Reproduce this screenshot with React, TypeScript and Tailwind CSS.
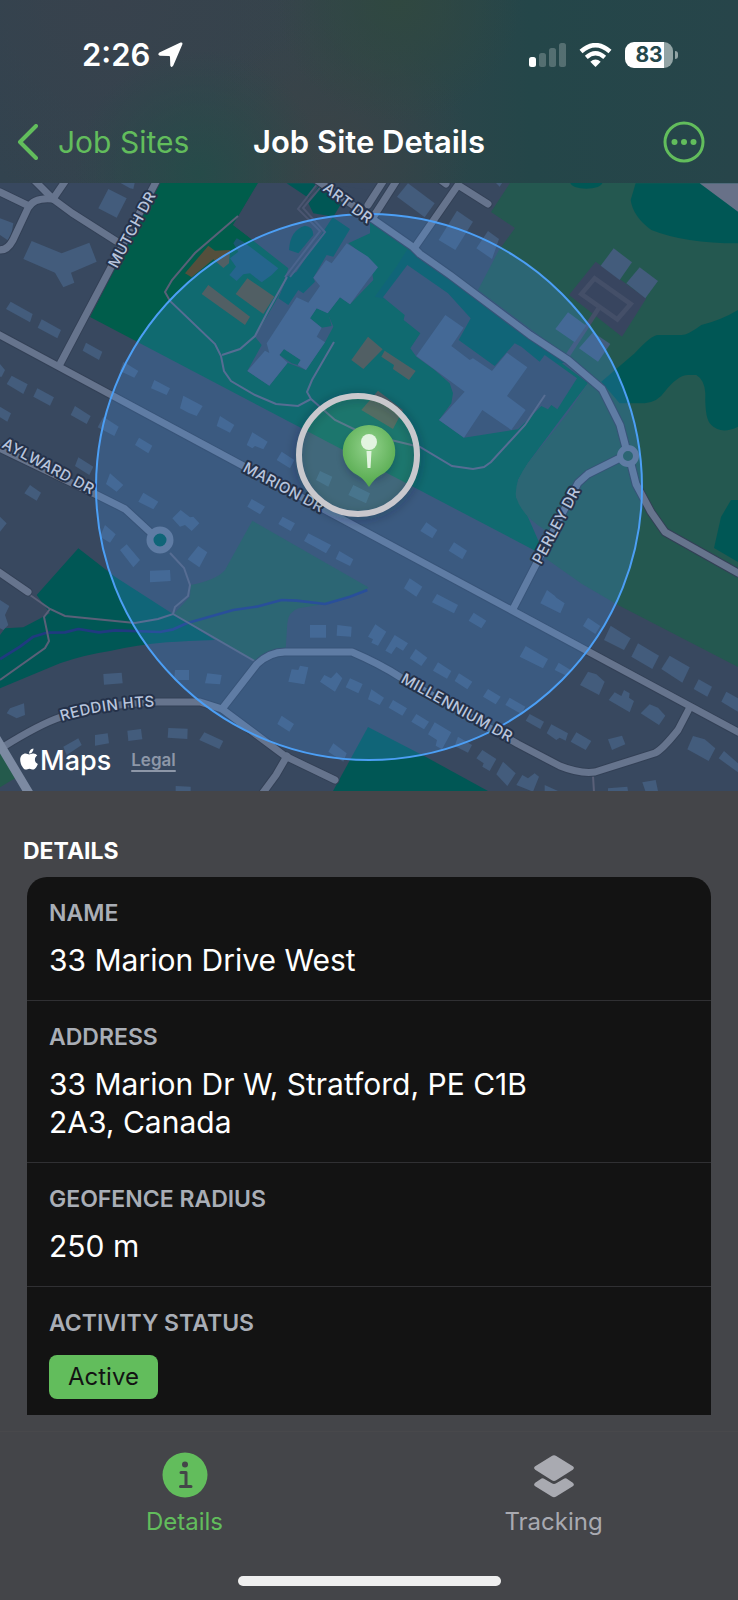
import React, { useState } from "react";
import { FaApple } from "react-icons/fa";

const colors = {
  land: "#38485f",
  green: "#005d4b",
  teal: "#005755",
  park: "#245850",
  building: "#435c7c",
  brown: "#544f3c",
  road: "#66748d",
  path: "#5a6078",
};

// the map is drawn as four tiles, each on its own grid of a third of a pixel
const tiles = {
  nw: "translate(0 180) scale(0.33333)",
  ne: "translate(368 180) scale(0.33333)",
  sw: "translate(0 480) scale(0.33333)",
  se: "translate(368 480) scale(0.33333)",
};

const houses: Record<keyof typeof tiles, string[]> = {
  nw: [
    "325,27 380,55 350,113 295,85",
    "0,115 40,130 30,185 0,165",
    "95,183 185,220 268,188 290,245 213,278 223,308 190,322 165,278 70,237",
    "32,365 98,402 90,427 18,387",
    "125,418 183,450 172,475 113,443",
    "258,488 307,515 297,540 248,512",
    "370,545 415,573 403,593 360,573",
    "463,600 510,625 500,645 453,625",
    "550,647 608,678 590,708 565,698 540,685",
    "660,708 703,735 690,758 650,738",
    "757,757 803,785 790,808 765,798 757,805 740,795",
    "845,815 883,840 870,865 830,840",
    "35,587 83,613 70,642 20,612",
    "112,625 162,652 150,677 100,650",
    "225,678 272,708 260,732 212,705",
    "310,710 356,740 343,768 293,742",
    "417,773 457,797 445,820 405,795",
    "235,832 280,860 268,885 225,858",
    "0,680 33,700 22,725 0,712",
    "0,552 15,570 5,590 0,590",
    "355,5 405,5 400,27 390,25",
    "960,873 997,890 985,920 948,900",
    // school, west wing
    "1040,190 1104,230 1134,262 1104,300 1050,373 1020,352 983,400 950,385 930,415 965,443 950,470 975,487 918,570 893,555 902,540 852,507 838,525 863,548 808,617 742,573 795,512 808,519 800,490 890,352 925,368 960,318 940,293 978,240 995,250",
  ],
  ne: [
    "120,10 200,70 170,112 87,50",
    "267,92 315,125 262,210 212,180",
    "360,153 393,177 372,237 325,205",
    "380,5 405,5 395,20",
    "737,205 792,247 755,300 698,257",
    "815,262 870,303 832,355 775,310",
    "600,397 655,437 620,487 562,447",
    "675,457 727,492 690,545 633,505",
    // school, east wing
    "232,405 287,443 250,498 305,540 315,535 372,573 417,518 478,562 417,648 473,690 430,750 343,690 288,773 213,720 290,635 145,528",
  ],
  sw: [
    "90,15 123,38 110,62 73,40",
    "0,110 20,130 0,155",
    "330,-20 370,15 350,35 318,12",
    "430,38 475,65 460,88 415,65",
    "542,90 570,112 580,110 598,130 575,153 555,135 540,140 517,115",
    "595,198 622,217 598,262 563,238",
    "380,193 420,240 400,262 360,210",
    "315,135 347,163 330,188 300,170",
    "450,272 510,270 512,303 450,307",
    "755,57 795,80 780,103 742,80",
    "848,110 885,130 872,153 835,132",
    "925,160 993,195 978,220 912,183",
    "1018,213 1060,238 1050,258 1007,237",
    "930,435 978,435 978,473 930,473",
    "1012,435 1055,440 1053,470 1010,467",
    "1060,15 1110,40 1098,70 1045,45",
    "310,582 365,578 368,610 312,614",
    "525,570 567,570 567,600 522,600",
    "622,580 665,585 660,613 615,610",
    "30,685 72,670 75,705 50,715 20,700",
    "0,360 28,378 15,405 25,435 10,450 0,445",
    "875,568 895,570 900,557 925,562 913,613 865,605",
    "960,605 973,585 993,595 1010,577 1027,595 1005,635",
    "1050,595 1088,612 1075,640 1037,622",
    "845,707 882,732 868,755 832,732",
    "1000,790 1040,820 1030,845 985,815",
    "285,765 323,760 327,790 285,797",
    "382,752 423,747 427,778 385,783",
    "505,744 563,746 562,777 503,773",
    "613,757 670,783 658,807 598,780",
    "190,800 235,775 245,795 200,825",
    "527,918 572,920 572,935 527,935",
  ],
  se: [
    "175,127 208,150 193,175 157,153",
    "258,187 297,212 283,238 242,212",
    "125,295 163,320 145,350 108,325",
    "207,342 270,375 258,400 192,367",
    "317,398 355,422 340,445 302,422",
    "22,433 55,455 30,497 10,488 15,478 0,470",
    "80,465 120,490 105,512 85,500 70,522 52,512",
    "143,507 178,533 160,558 125,535",
    "210,547 250,573 237,596 195,572",
    "273,580 313,605 298,628 260,603",
    "360,627 398,650 383,673 345,650",
    "425,653 472,680 460,702 412,675",
    "485,702 528,725 517,747 473,722",
    "10,628 48,653 35,675 0,658",
    "75,660 117,685 103,707 62,683",
    "145,702 183,725 168,748 130,725",
    "200,727 250,757 222,808 203,797 207,780 180,763",
    "270,770 312,795 300,818 260,798",
    "343,810 385,837 365,873 343,860 347,850 325,835",
    "405,845 443,880 418,918 385,883",
    "463,885 480,895 500,880 513,890 495,935 445,915",
    "530,915 570,933 530,933",
    "550,733 600,760 593,782 575,773 565,780 536,760",
    "625,757 670,783 653,810 608,785",
    "720,778 762,767 772,793 732,810",
    "823,907 863,900 870,933 832,933",
    "720,925 778,920 780,933 720,933",
    "975,768 1010,778 1042,805 1022,843 958,808",
    "1068,813 1110,850 1110,877 1052,835",
    "537,330 560,347 565,353 590,370 577,400 517,370",
    "660,413 697,438 682,462 645,438",
    "728,437 788,475 768,510 708,480",
    "810,490 873,527 853,567 790,530",
    "905,527 965,562 943,608 880,567",
    "992,598 1032,620 1018,650 977,627",
    "1075,635 1110,655 1110,695 1060,665",
    "473,498 540,537 525,565 455,530",
    "572,548 608,570 595,587 560,570",
    "660,575 685,583 710,605 693,645 636,615",
    "740,637 760,648 768,630 785,640 783,653 798,663 785,697 722,660",
    "845,673 870,683 892,707 873,735 818,700",
  ],
};

const roads = [
  "M0 192 L27 205",
  "M-4 249 Q6 253 13 240 L28 208 Q34 197 53 199 L72 213 L116 241",
  "M34 180 L53 199 L66 180",
  "M157 180 L60 364",
  "M-4 333 L738 732",
  "M-5 446 L97 495 L125 509 L150 532",
  "M-4 570 L28 592",
  "M3 747 Q40 724 61 717 Q110 703 157 702 H200 L222 709 L285 756 L335 780",
  "M222 709 L257 664 Q270 652 285 652 H352 Q380 664 400 677 L518 744 L560 766 Q580 774 595 772 L655 753 Q662 750 678 730 L690 707",
  "M287 756 L276 775 L262 794",
  "M513 609 L578 483 L588 474 L620 458",
  "M305 172 L413 247 L420 254 L450 275 L530 335 L568 360 L602 389 L620 425 L626 448",
  "M631 464 L636 484 L651 512 L665 532 L738 573",
  "M415 247 L458 185 L488 204",
  "M368 205 L384 180",
  "M374 216 L397 180",
  "M438 178 L446 184",
];

const footpaths = [
  "M238 216 L195 253 L172 280 L165 292 L170 301 L215 344 L221 356 L224 371 L231 381 L255 395 L276 404 L298 406 L311 399 L307 392 L312 380 L334 342",
  "M222 355 L240 349 L255 336 L268 311 L287 277",
  "M311 399 L335 420 L362 433 L395 441 L420 447 L452 466 L473 469 L484 467 L491 462 L525 425 L545 395",
  "M30 595 L50 609 L65 616 L135 623 L158 619 L173 614 L256 662",
  "M50 609 L44 617 L49 641 L45 648 L0 680",
  "M173 614 L175 607 L188 596 L190 585 L184 568 L170 553",
  "M593 776 L594 792",
];

const labels = [
  { text: "MUTCH DR", x: 117, y: 269, angle: -62 },
  { text: "ART DR", x: 322, y: 190, angle: 37 },
  { text: "AYLWARD DR", x: 1, y: 447, angle: 28 },
  { text: "MARION DR", x: 242, y: 471, angle: 28 },
  { text: "PERLEY DR", x: 541, y: 565, angle: -62 },
  { text: "MILLENNIUM DR", x: 400, y: 682, angle: 29 },
];

function SiteMap() {
  return (
    <svg
      viewBox="0 183 738 608"
      className="block h-auto w-full"
      role="img"
      aria-label="Map of the job site"
    >
      <defs>
        <radialGradient id="pin" cx="0.5" cy="0.35" r="0.65">
          <stop offset="0" stopColor="#92d28c" />
          <stop offset="1" stopColor="#53a84b" />
        </radialGradient>
        <filter id="soft" x="-50%" y="-50%" width="200%" height="200%">
          <feGaussianBlur stdDeviation="5" />
        </filter>
        <path id="reddin" d="M62 721 Q108 707 170 706" />
      </defs>

      <rect y="183" width="738" height="608" fill={colors.land} />

      {/* parks and woods */}
      <polygon
        fill={colors.green}
        points="158,183 258,183 233,225 290,268 340,215 368,217 413,250 588,383 560,420 528,463 518,480 516,497 528,517 545,556 90,317"
      />
      <path
        fill={colors.park}
        d="M510 183 L491 212 L515 228 L499 250 L478 290 L568 357 L588 383 L568 413 L528 463 Q514 482 516 497 Q522 516 545 530 V558 L582 584 L618 605 L738 667 V183 Z"
      />
      <polygon
        fill={colors.teal}
        points="368,727 333,791 488,791 426,757"
      />
      <g transform={tiles.nw}>
        <polygon
          fill={colors.land}
          points="775,10 960,10 1110,30 1110,160 1045,190 1110,240 1120,300 1050,373 1020,352 983,400 1000,440 975,487 918,570 863,548 808,617 742,573 785,495 765,470 835,350 865,265 700,135"
        />
        <polygon fill={colors.teal} points="860,10 955,10 925,53" />
        <polygon
          fill={colors.teal}
          points="955,20 925,70 940,100 1000,110 1030,60"
        />
        <polygon
          fill={colors.teal}
          points="998,112 1050,147 1000,230 980,225 940,293 945,305 910,340 895,330 865,375 835,355 862,290 890,275"
        />
        <path
          fill={colors.teal}
          d="M915 137 Q940 140 940 165 L895 220 L867 210 Q870 150 915 137 Z"
        />
        <polygon
          fill={colors.green}
          points="950,385 930,415 965,443 995,438 985,400"
        />
        <polygon
          fill={colors.green}
          points="852,507 902,540 893,555 875,550 838,525"
        />
        <polygon
          fill="#1b5670"
          points="710,175 730,185 835,265 815,285 785,307 750,280 730,283 710,303 688,285 708,260 690,235 715,215 700,190"
        />
        <polygon
          fill={colors.brown}
          points="625,197 645,212 690,210 687,250 670,264 640,238 575,292 555,280"
        />
        <polygon fill={colors.brown} points="625,315 750,410 735,435 605,342" />
        <polygon fill={colors.brown} points="742,295 823,350 790,402 707,342" />
        <polygon
          fill={colors.brown}
          points="1104,470 1148,508 1090,567 1054,540"
        />
      </g>
      <g transform={tiles.ne}>
        <polygon
          fill={colors.teal}
          points="20,350 85,260 118,208 160,235 600,548 380,558 272,480 240,400"
        />
        <polygon
          fill={colors.land}
          points="118,255 240,340 308,415 272,480 380,558 440,490 460,500 515,545 530,525 627,595 568,688 550,675 540,688 520,678 450,748 288,773 213,720 250,670 255,640 245,610 200,570 145,530 127,505 157,460 107,420 110,405 45,352"
        />
        <path
          fill={colors.teal}
          d="M803 10 L788 60 Q795 110 850 150 Q950 190 1110 190 V10 Z"
        />
        <ellipse cx="655" cy="8" rx="48" ry="18" fill={colors.teal} />
        <polygon fill="#687188" points="995,10 1110,95 1110,10" />
        <path
          fill={colors.teal}
          d="M1110 390 Q1060 420 1000 435 Q960 465 940 465 H870 Q850 465 800 520 L700 605 L755 670 H830 Q870 665 890 635 Q930 585 960 585 H985 Q1010 600 1012 640 Q1010 720 1030 735 Q1060 765 1110 740 Z"
        />
        <polygon fill="#38455f" points="683,245 835,355 762,470 603,345" />
        <g fill="none" stroke="#444f68" strokeWidth="14">
          <polygon points="680,295 788,372 748,418 640,342" />
          <path d="M692 385 L600 525" />
        </g>
        <polygon
          fill={colors.brown}
          points="50,512 143,573 123,600 75,567 78,555 40,530"
        />
        <polygon fill={colors.brown} points="30,632 105,690 75,747 -20,690" />
      </g>
      <g transform={tiles.sw}>
        <path
          fill={colors.teal}
          d="M235 205 L345 290 L520 403 L645 480 Q560 483 500 487 Q410 495 330 513 Q250 525 180 550 L0 625 V465 L15 445 L70 442 L150 400 L110 345 Z"
        />
        <path
          fill={colors.park}
          d="M757 122 L1105 322 L1095 335 L975 372 L895 385 Q865 395 862 430 L857 507 L800 520 L767 547 L520 403 L570 350 L572 315 Q650 300 675 270 Z"
        />
        <polygon fill="#245a4c" points="0,815 0,922 45,895" />
        <path
          fill="none"
          stroke="#203a80"
          strokeWidth="8"
          strokeLinejoin="round"
          d="M0 537 L60 500 L100 470 L140 458 L195 457 L235 447 L297 457 L345 451 L480 456 L520 448 L560 430 L700 390 L770 380 L845 360 L890 362 L975 372 L1050 350 L1102 330"
        />
      </g>
      <polygon
        fill={colors.teal}
        points="731,500 721,517 714,548 738,562 738,500"
      />

      {(Object.keys(tiles) as (keyof typeof tiles)[]).map((tile) => (
        <g key={tile} transform={tiles[tile]} fill={colors.building}>
          {houses[tile].map((points) => (
            <polygon key={points} points={points} />
          ))}
        </g>
      ))}

      <g fill="none" stroke="#4a5570" strokeWidth="2">
        <path d="M318 183 L298 209 L320 231 L285 277" />
        <path d="M324 183 L303 208 L325 232 L290 277" />
      </g>
      <g fill="none" stroke={colors.path} strokeWidth="2">
        {footpaths.map((d) => (
          <path key={d} d={d} />
        ))}
      </g>
      <g
        fill="none"
        strokeLinecap="round"
        strokeLinejoin="round"
        stroke="#334056"
        strokeWidth="9"
      >
        {roads.map((d) => (
          <path key={d} d={d} />
        ))}
      </g>
      <g
        fill="none"
        strokeLinecap="round"
        strokeLinejoin="round"
        stroke={colors.road}
        strokeWidth="7"
      >
        {roads.map((d) => (
          <path key={d} d={d} />
        ))}
        <path d="M-4 738 L30 795" stroke="#7c8aa2" strokeWidth="9" />
        <circle cx="160" cy="540" r="10" fill={colors.teal} />
        <circle cx="628" cy="456" r="8" fill={colors.park} strokeWidth="6" />
      </g>

      {/* geofence */}
      <circle
        cx="369"
        cy="487"
        r="273"
        fill="#4a9bf5"
        fillOpacity="0.22"
        stroke="#4c9ff5"
        strokeWidth="2"
      />

      <g
        className="font-['Inter',sans-serif] text-[15px] font-medium tracking-wide"
        fill="#b9c5dd"
        stroke="#25324a"
        strokeWidth="4"
        strokeLinejoin="round"
        paintOrder="stroke"
      >
        {labels.map((label) => (
          <text
            key={label.text}
            transform={`translate(${label.x} ${label.y}) rotate(${label.angle})`}
          >
            {label.text}
          </text>
        ))}
        <text>
          <textPath href="#reddin">REDDIN HTS</textPath>
        </text>
      </g>

      {/* site pin */}
      <circle
        cx="358"
        cy="457"
        r="60"
        fill="none"
        stroke="#0b2230"
        strokeOpacity="0.25"
        strokeWidth="8"
        filter="url(#soft)"
      />
      <circle
        cx="358"
        cy="455"
        r="59"
        fill="#62bd5c"
        fillOpacity="0.15"
        stroke="#c9c8cd"
        strokeWidth="6"
      />
      <circle
        cx="369"
        cy="456"
        r="24"
        fill="#0b2230"
        fillOpacity="0.35"
        filter="url(#soft)"
      />
      <path
        fill="url(#pin)"
        d="M369 425 A26.500 26.500 0 0 1 380 475.500 Q374 479 369 487 Q364 479 358 475.500 A26.500 26.500 0 0 1 369 425 Z"
      />
      <circle cx="369" cy="442" r="8" fill="#e2f4e0" />
      <path fill="#e2f4e0" d="M366.500 451 H371.500 L370.500 468 H367.500 Z" />
    </svg>
  );
}

function StatusBar() {
  return (
    <div className="flex h-[110px] items-center justify-between pr-[60px] pl-[82px]">
      <div className="flex items-center gap-2">
        <span className="text-[31px] leading-10 font-semibold">2:26</span>
        <svg width="25" height="26" viewBox="0 0 25 26" fill="#fff">
          <path d="M22.500 0.600 L1.400 10.600 Q-1 12.600 1.800 13.700 L11 14 Q12 14 12 15 L12.300 23.500 Q13.500 26.500 15.300 23.600 L24.300 2.500 Q25 0 22.500 0.600 Z" />
        </svg>
      </div>
      <div className="flex items-center gap-[13px]">
        <svg width="37" height="25" viewBox="0 0 37 25" fill="#fff">
          <rect y="14" width="7" height="10" rx="2.500" />
          <g opacity="0.22">
            <rect x="10" y="10" width="7" height="14" rx="2.500" />
            <rect x="20" y="5" width="7" height="19" rx="2.500" />
            <rect x="30" width="7" height="24" rx="2.500" />
          </g>
        </svg>
        <svg width="33" height="24" viewBox="0 0 33 24" fill="none">
          <path
            d="M2 8.500 Q16.500 -4.200 31 8.500"
            stroke="#fff"
            strokeWidth="4.500"
          />
          <path
            d="M7.300 14.300 Q16.500 6.200 25.700 14.300"
            stroke="#fff"
            strokeWidth="4.300"
          />
          <path
            d="M11.300 18.800 Q16.500 14 21.700 18.800 L16.500 24 Z"
            fill="#fff"
          />
        </svg>
        <div className="flex items-center gap-[2px]">
          <div className="flex h-[26px] w-12 items-center justify-center rounded-[9px] bg-[linear-gradient(90deg,#fff_82%,#92a4a5_82%)] text-[21px] font-bold text-[#24474b]">
            83
          </div>
          <div className="h-[8px] w-[3px] rounded-r-full bg-[#92a4a5]" />
        </div>
      </div>
    </div>
  );
}

function NavBar() {
  return (
    <nav className="grid h-[63px] grid-cols-[1fr_auto_1fr] items-center px-[17px]">
      <a href="#sites" className="flex items-center gap-5 text-[#62bd5c]">
        <svg
          width="21"
          height="36"
          viewBox="0 0 21 36"
          fill="none"
          stroke="currentColor"
          strokeWidth="4"
          strokeLinecap="round"
          strokeLinejoin="round"
        >
          <path d="M19 2 L3 18 L19 34" />
        </svg>
        <span className="text-[30px] leading-10">Job Sites</span>
      </a>
      <h1 className="text-[31px] leading-10 font-semibold">Job Site Details</h1>
      <button
        type="button"
        aria-label="More"
        className="mr-4 justify-self-end text-[#62bd5c]"
      >
        <svg width="42" height="42" viewBox="0 0 42 42" fill="currentColor">
          <circle
            cx="21"
            cy="21"
            r="19"
            fill="none"
            stroke="currentColor"
            strokeWidth="3"
          />
          <circle cx="11.500" cy="21" r="3" />
          <circle cx="21" cy="21" r="3" />
          <circle cx="30.500" cy="21" r="3" />
        </svg>
      </button>
    </nav>
  );
}

function Field({
  label,
  children,
}: {
  label: string;
  children: React.ReactNode;
}) {
  return (
    <div className="border-b border-[#303033] px-[22px] pt-5 pb-[21px] last:border-b-0 last:pb-4">
      <dt className="text-[23px] leading-8 font-semibold text-[#a9aeb6]">
        {label}
      </dt>
      <dd className="mt-3 max-w-[520px] text-[30px] leading-[38px]">
        {children}
      </dd>
    </div>
  );
}

export default function App() {
  const [tab, setTab] = useState("details");

  return (
    <div className="flex min-h-screen flex-col bg-[#444549] font-['Inter','Liberation_Sans',sans-serif] text-white">
      <header className="bg-[#30454c] bg-[radial-gradient(circle_at_27%_95%,#264b49_0%,transparent_22%),radial-gradient(circle_at_54%_0%,#304840_0%,transparent_28%),radial-gradient(circle_at_45%_85%,#3a4347_0%,transparent_32%),radial-gradient(circle_at_15%_0%,#38424d_0%,transparent_32%),linear-gradient(90deg,#32434f_0%,#36444b_40%,#244649_72%,#27454a_100%)] pb-[10px]">
        <StatusBar />
        <NavBar />
      </header>

      <div className="relative">
        <SiteMap />
        <div className="absolute bottom-[14px] left-[18px] flex items-center">
          <FaApple className="mb-1 h-6 w-[22px]" />
          <span className="text-[27px] leading-8 font-medium">Maps</span>
          <a
            href="#legal"
            className="ml-5 text-[17px] font-semibold text-[#8d97a8] underline decoration-2 underline-offset-4"
          >
            Legal
          </a>
        </div>
      </div>

      <main className="flex-1 px-[27px] pt-11">
        <h2 className="-ml-1 text-[23px] leading-8 font-bold">DETAILS</h2>
        <dl className="mt-[10px] rounded-t-[20px] bg-[#131313]">
          <Field label="NAME">33 Marion Drive West</Field>
          <Field label="ADDRESS">33 Marion Dr W, Stratford, PE C1B 2A3, Canada</Field>
          <Field label="GEOFENCE RADIUS">250 m</Field>
          <Field label="ACTIVITY STATUS">
            <span className="mt-1 inline-block rounded-lg bg-[#62bd5c] px-[19px] text-[24px] leading-[44px] text-[#131313]">
              Active
            </span>
          </Field>
        </dl>
      </main>

      <footer className="mt-4 border-t border-[#48484b] pt-5 pb-[14px]">
        <div className="grid grid-cols-2">
          <button
            type="button"
            onClick={() => setTab("details")}
            className={
              tab === "details"
                ? "flex flex-col items-center gap-2 text-[#62bd5c]"
                : "flex flex-col items-center gap-2 text-[#a9aab1]"
            }
          >
            <svg width="46" height="46" viewBox="0 0 46 46">
              <circle cx="23" cy="23" r="22.500" fill="currentColor" />
              <circle cx="23" cy="12.500" r="3" fill="#444549" />
              <path
                d="M19 20.500 H24 V34 M18.500 34.500 H29"
                fill="none"
                stroke="#444549"
                strokeWidth="3"
                strokeLinecap="round"
                strokeLinejoin="round"
              />
            </svg>
            <span className="text-[24px] leading-8">Details</span>
          </button>
          <button
            type="button"
            onClick={() => setTab("tracking")}
            className={
              tab === "tracking"
                ? "flex flex-col items-center gap-2 text-[#62bd5c]"
                : "flex flex-col items-center gap-2 text-[#a9aab1]"
            }
          >
            <svg width="46" height="46" viewBox="0 0 46 46" fill="currentColor">
              <path d="M20.800 4 Q23 2.600 25.200 4 L41.800 14.300 Q44 16 41.800 17.700 L25.200 28.300 Q23 29.600 20.800 28.300 L4.200 17.700 Q2 16 4.200 14.300 Z" />
              <path d="M10.500 26.500 L4.200 30.700 Q2 32.500 4.200 34.200 L20.800 44.500 Q23 45.800 25.200 44.500 L41.800 34.200 Q44 32.500 41.800 30.700 L35.500 26.500 Q34 26 32.500 27 L25.200 31.300 Q23 32.500 20.800 31.300 L13.500 27 Q12 26 10.500 26.500 Z" />
            </svg>
            <span className="text-[24px] leading-8">Tracking</span>
          </button>
        </div>
        <div className="mx-auto mt-[38px] h-[10px] w-[263px] rounded-full bg-[#efefef]" />
      </footer>
    </div>
  );
}
